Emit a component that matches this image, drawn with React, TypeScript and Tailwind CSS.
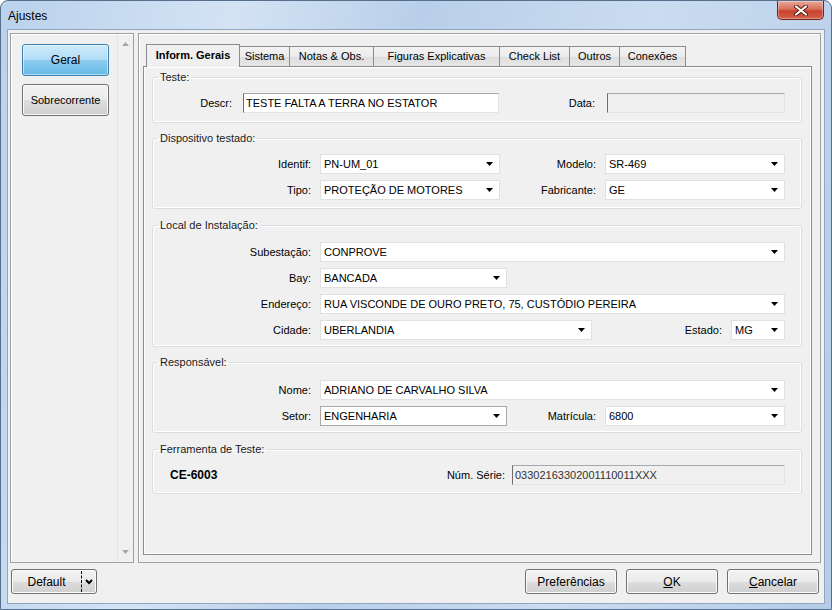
const Arrow = () => (
  <svg width="7" height="4" viewBox="0 0 7 4" className="shrink-0">
    <path d="M0 0h7L3.5 4z" fill="#000" />
  </svg>
);

const Combo = ({ value, className, focus }: { value: string; className: string; focus?: boolean }) => (
  <div
    className={`flex items-center h-[20px] bg-white border pl-[3px] pr-[6px] ${
      focus ? "border-[#a9a9a9]" : "border-[#e0e0e0]"
    } ${className}`}
  >
    <span className="flex-1 truncate">{value}</span>
    <Arrow />
  </div>
);

const Label = ({ text, className }: { text: string; className: string }) => (
  <div className={`text-right shrink-0 ${className}`}>{text}</div>
);

const Group = ({ title, className, children }: { title: string; className: string; children: React.ReactNode }) => (
  <fieldset
    className={`m-0 px-0 border border-[#d5dfe5] rounded-[3px] shadow-[inset_1px_1px_0_#fff,inset_-1px_-1px_0_#fff] ${className}`}
  >
    <legend className="ml-[5px] px-[2px] leading-[13px] text-[#1a1a1a]">{title}</legend>
    <div className="flex flex-col gap-[6px]">{children}</div>
  </fieldset>
);

const Btn = ({ children, className }: { children: React.ReactNode; className: string }) => (
  <div
    className={`h-[25px] flex items-center justify-center rounded-[3px] border border-[#707070] bg-[linear-gradient(#f2f2f2,#ebebeb_50%,#dddddd_51%,#cfcfcf)] shadow-[inset_0_0_0_1px_#fcfcfc] text-[12px] ${className}`}
  >
    {children}
  </div>
);

const tabs = ["Sistema", "Notas & Obs.", "Figuras Explicativas", "Check List", "Outros", "Conexões"];
const tabW = ["w-[50px]", "w-[84px]", "w-[126px]", "w-[70px]", "w-[50px]", "w-[66px]"];

export default function App() {
  return (
    <div className="w-[832px] h-[610px] flex flex-col rounded-t-[8px] border border-[#566f8d] bg-[linear-gradient(100deg,#bad2ec_0%,#d3e3f4_25%,#b9cfe9_45%,#cadcf0_70%,#b5cce7_100%)] font-['Liberation_Sans',Arial,sans-serif] text-[11px] text-black overflow-hidden">
      {/* title bar */}
      <div className="h-[28px] flex items-start shrink-0">
        <div className="pl-[7px] pt-[8px] text-[12px] leading-[14px]">Ajustes</div>
        <div className="ml-auto mr-[7px] w-[47px] h-[19px] rounded-b-[5px] border border-t-0 border-[#6b2419] bg-[linear-gradient(#e9a99b,#d6705e_45%,#c7412c_55%,#d4604a)] shadow-[inset_0_0_0_1px_rgba(255,255,255,0.35)] flex items-center justify-center">
          <svg width="14" height="11" viewBox="0 0 14 11">
            <path d="M2 1.5L12 9.5M12 1.5L2 9.5" stroke="#5a1a10" strokeWidth="4" strokeLinecap="round" />
            <path d="M2 1.5L12 9.5M12 1.5L2 9.5" stroke="#fff" strokeWidth="2.2" strokeLinecap="round" />
          </svg>
        </div>
      </div>

      {/* client */}
      <div className="flex-1 mx-[6px] mb-[5px] bg-[#f0f0f0] border border-[#8ea6c2] flex flex-col">
        <div className="flex-1 flex gap-[4px] pl-[2px] pr-[3px] pt-[3px]">
          {/* left panel */}
          <div className="w-[124px] flex border border-[#a0a0a0] shadow-[inset_1px_1px_0_#fff]">
            <div className="flex-1 flex flex-col gap-[8px] pl-[11px] pt-[10px]">
              <div className="w-[87px] h-[32px] rounded-[3px] border border-[#3c7fb1] bg-[linear-gradient(#d0ebfb,#b0dcf7_50%,#8ccbef_51%,#67bbe6)] shadow-[inset_0_0_0_1px_rgba(255,255,255,0.5)] flex items-center justify-center text-[12px]">
                Geral
              </div>
              <div className="w-[87px] h-[32px] rounded-[3px] border border-[#707070] bg-[linear-gradient(#f2f2f2,#ebebeb_50%,#dddddd_51%,#cfcfcf)] shadow-[inset_0_0_0_1px_#fcfcfc] flex items-center justify-center">
                Sobrecorrente
              </div>
            </div>
            <div className="w-[16px] border-l border-[#e6e6e6] flex flex-col justify-between items-center py-[8px]">
              <svg width="7" height="4" viewBox="0 0 7 4">
                <path d="M0 4h7L3.5 0z" fill="#a8a8a8" />
              </svg>
              <svg width="7" height="4" viewBox="0 0 7 4">
                <path d="M0 0h7L3.5 4z" fill="#a8a8a8" />
              </svg>
            </div>
          </div>

          {/* right panel */}
          <div className="flex-1 flex flex-col border border-[#a0a0a0] shadow-[inset_1px_1px_0_#fff] pl-[4px] pr-[8px] pt-[11px] pb-[7px]">
            <div className="flex items-end h-[22px] pl-[3px] relative z-10 -mb-[1px]">
              <div className="w-[94px] h-[23px] bg-[#f0f0f0] border border-b-0 border-[#898c95] flex items-center justify-center font-bold pb-[1px]">
                Inform. Gerais
              </div>
              {tabs.map((t, i) => (
                <div
                  key={t}
                  className={`${tabW[i]} h-[20px] border-t border-r border-[#898c95] bg-[linear-gradient(#f3f3f3,#ebebeb_50%,#dedede_51%,#e5e5e5)] flex items-center justify-center mb-[1px]`}
                >
                  {t}
                </div>
              ))}
            </div>
            <div className="flex-1 flex flex-col border border-[#898c95] shadow-[inset_1px_1px_0_#fff,inset_-1px_-1px_0_#fff] pl-[8px] pr-[9px] pt-[4px]">
              <Group title="Teste:" className="pt-[9px] pb-[9px]">
                <div className="flex items-center h-[20px]">
                  <Label text="Descr:" className="w-[90px] pr-[11px]" />
                  <div className="w-[256px] h-[20px] bg-white border border-[#e3e3e3] border-l-[#6d6d6d] border-t-[#a8a8a8] flex items-center pl-[2px]">
                    TESTE FALTA A TERRA NO ESTATOR
                  </div>
                  <Label text="Data:" className="w-[108px] pr-[12px]" />
                  <div className="w-[178px] h-[20px] bg-[#f0f0f0] border border-[#e3e3e3] border-l-[#6d6d6d] border-t-[#a8a8a8]" />
                </div>
              </Group>

              <Group title="Dispositivo testado:" className="mt-[9px] pt-[9px] pb-[8px]">
                <div className="flex items-center">
                  <Label text="Identif:" className="w-[167px] pr-[9px]" />
                  <Combo value="PN-UM_01" className="w-[180px]" />
                  <Label text="Modelo:" className="w-[105px] pr-[9px]" />
                  <Combo value="SR-469" className="w-[180px]" />
                </div>
                <div className="flex items-center">
                  <Label text="Tipo:" className="w-[167px] pr-[9px]" />
                  <Combo value="PROTEÇÃO DE MOTORES" className="w-[180px]" />
                  <Label text="Fabricante:" className="w-[105px] pr-[9px]" />
                  <Combo value="GE" className="w-[180px]" />
                </div>
              </Group>

              <Group title="Local de Instalação:" className="mt-[10px] pt-[10px] pb-[6px]">
                <div className="flex items-center">
                  <Label text="Subestação:" className="w-[167px] pr-[9px]" />
                  <Combo value="CONPROVE" className="w-[465px]" />
                </div>
                <div className="flex items-center">
                  <Label text="Bay:" className="w-[167px] pr-[9px]" />
                  <Combo value="BANCADA" className="w-[187px]" />
                </div>
                <div className="flex items-center">
                  <Label text="Endereço:" className="w-[167px] pr-[9px]" />
                  <Combo value="RUA VISCONDE DE OURO PRETO, 75, CUSTÓDIO PEREIRA" className="w-[465px]" />
                </div>
                <div className="flex items-center">
                  <Label text="Cidade:" className="w-[167px] pr-[9px]" />
                  <Combo value="UBERLANDIA" className="w-[272px]" />
                  <Label text="Estado:" className="w-[139px] pr-[9px]" />
                  <Combo value="MG" className="w-[54px]" />
                </div>
              </Group>

              <Group title="Responsável:" className="mt-[9px] pt-[11px] pb-[6px]">
                <div className="flex items-center">
                  <Label text="Nome:" className="w-[167px] pr-[9px]" />
                  <Combo value="ADRIANO DE CARVALHO SILVA" className="w-[465px]" />
                </div>
                <div className="flex items-center">
                  <Label text="Setor:" className="w-[167px] pr-[9px]" />
                  <Combo value="ENGENHARIA" className="w-[187px]" focus />
                  <Label text="Matrícula:" className="w-[98px] pr-[9px]" />
                  <Combo value="6800" className="w-[180px]" />
                </div>
              </Group>

              <Group title="Ferramenta de Teste:" className="mt-[10px] pt-[9px] pb-[8px]">
                <div className="flex items-center h-[20px] pl-[17px] pr-[16px]">
                  <div className="font-bold text-[12px]">CE-6003</div>
                  <div className="flex-1 text-right pr-[7px]">Núm. Série:</div>
                  <div className="w-[273px] h-[20px] bg-[#f0f0f0] border border-[#e3e3e3] border-l-[#6d6d6d] border-t-[#a8a8a8] flex items-center pl-[2px] text-[#333]">
                    03302163302001110011XXX
                  </div>
                </div>
              </Group>
            </div>
          </div>
        </div>

        {/* bottom buttons */}
        <div className="flex items-center h-[25px] mt-[6px] mb-[9px] pl-[3px] pr-[5px]">
          <div className="w-[86px] h-[25px] flex rounded-[3px] border border-[#707070] bg-[linear-gradient(#f2f2f2,#ebebeb_50%,#dddddd_51%,#cfcfcf)] shadow-[inset_0_0_0_1px_#fcfcfc] text-[12px]">
            <div className="flex-1 flex items-center justify-center border-r border-dashed border-black my-[1px]">Default</div>
            <div className="w-[14px] flex items-center justify-center">
              <svg width="8" height="6" viewBox="0 0 8 6">
                <path d="M1 1l3 3 3-3" stroke="#000" strokeWidth="2" fill="none" />
              </svg>
            </div>
          </div>
          <div className="ml-auto flex gap-[9px]">
            <Btn className="w-[92px]">Preferências</Btn>
            <Btn className="w-[92px]">
              <span>
                <span className="underline">O</span>K
              </span>
            </Btn>
            <Btn className="w-[92px]">
              <span>
                <span className="underline">C</span>ancelar
              </span>
            </Btn>
          </div>
        </div>
      </div>
    </div>
  );
}
